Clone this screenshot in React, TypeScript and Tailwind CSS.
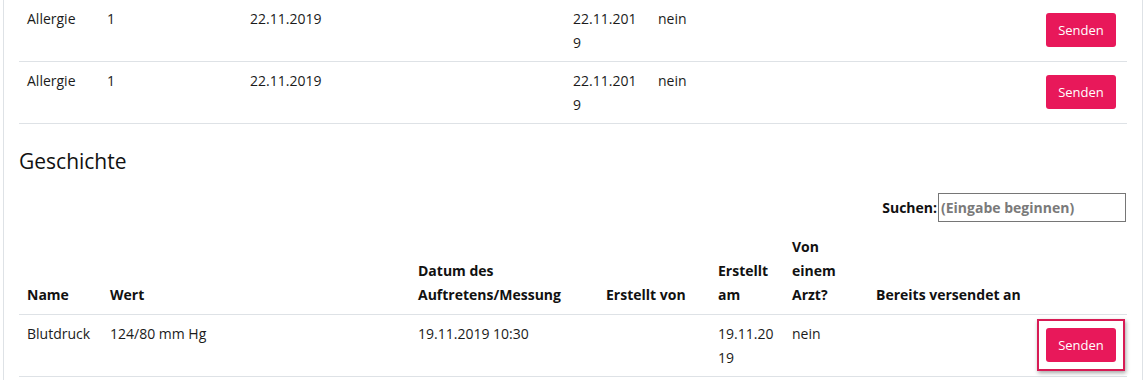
import React from "react";

const font = { fontFamily: '"Open Sans", "Noto Sans", Arial, sans-serif' };

function SendButton({ highlight }: { highlight?: boolean }) {
  return (
    <span className="relative -top-[1px] inline-block align-middle">
      {highlight && (
        <span className="absolute -left-[9px] -right-[9px] -top-[9px] -bottom-[9px] border-2 border-[#d81b55] shadow-[1px_2px_4px_rgba(0,0,0,0.35)]" />
      )}
      <button className="relative flex h-[34px] w-[70px] items-center justify-center rounded-[3px] bg-[#e8185a] text-[13px] text-white">
        Senden
      </button>
    </span>
  );
}

const topCols = [80, 143, 211, 112, 85, 90, 200, 187];
const botCols = [83, 308, 188, 112, 74, 84, 170, 89];

function TopRow() {
  return (
    <tr className="border-t border-[#dee2e6] align-top">
      <td className="px-2 pt-[7px] pb-[6px]">Allergie</td>
      <td className="px-2 pt-[7px] pb-[6px]">1</td>
      <td className="px-2 pt-[7px] pb-[6px]">22.11.2019</td>
      <td className="px-2 pt-[7px] pb-[6px]"></td>
      <td className="px-2 pt-[7px] pb-[6px] break-all">22.11.2019</td>
      <td className="px-2 pt-[7px] pb-[6px]">nein</td>
      <td className="px-2 pt-[7px] pb-[6px]"></td>
      <td className="pl-2 pr-[11px] text-right align-middle">
        <SendButton />
      </td>
    </tr>
  );
}

export default function App() {
  return (
    <div className="h-[381px] w-[1146px] overflow-hidden bg-white text-[14px] leading-[24px] text-[#1b1b1b]" style={font}>
      <div className="ml-[3px] h-full w-[1140px] border-x border-[#dee2e6] px-[15px]">
        <table className="-mt-px w-[1108px] table-fixed border-collapse">
          <colgroup>
            {topCols.map((w, i) => (
              <col key={i} style={{ width: w }} />
            ))}
          </colgroup>
          <tbody>
            <TopRow />
            <TopRow />
            <tr className="border-t border-[#dee2e6]">
              <td colSpan={8} className="p-0"></td>
            </tr>
          </tbody>
        </table>

        <h2 className="mt-[24px] text-[21px] leading-[26px] text-[#111]">Geschichte</h2>

        <div className="mt-[19px] flex items-center justify-end pr-px">
          <label className="font-bold text-[#111]">Suchen:</label>
          <input
            className="ml-[1px] h-[29px] w-[188px] border border-[#767676] px-[2px] font-bold outline-none placeholder:text-[#7a7a7a]"
            placeholder="(Eingabe beginnen)"
          />
        </div>

        <table className="mt-[13px] w-[1108px] table-fixed border-collapse">
          <colgroup>
            {botCols.map((w, i) => (
              <col key={i} style={{ width: w }} />
            ))}
          </colgroup>
          <thead>
            <tr className="border-b border-[#dee2e6] align-bottom text-left font-bold text-[#111]">
              <th className="px-2 pb-[7px]">Name</th>
              <th className="px-2 pb-[7px]">Wert</th>
              <th className="px-2 pb-[7px]">Datum des Auftretens/Messung</th>
              <th className="px-2 pb-[7px]">Erstellt von</th>
              <th className="px-2 pb-[7px]">Erstellt am</th>
              <th className="px-2 pb-[7px]">Von einem Arzt?</th>
              <th className="px-2 pb-[7px]">Bereits versendet an</th>
              <th className="px-2 pb-[7px]"></th>
            </tr>
          </thead>
          <tbody>
            <tr className="border-b border-[#dee2e6] align-top">
              <td className="px-2 pt-[7px] pb-[6px]">Blutdruck</td>
              <td className="px-2 pt-[7px] pb-[6px]">124/80 mm Hg</td>
              <td className="px-2 pt-[7px] pb-[6px]">19.11.2019 10:30</td>
              <td className="px-2 pt-[7px] pb-[6px]"></td>
              <td className="px-2 pt-[7px] pb-[6px] break-all">19.11.2019</td>
              <td className="px-2 pt-[7px] pb-[6px]">nein</td>
              <td className="px-2 pt-[7px] pb-[6px]"></td>
              <td className="pl-2 pr-[11px] text-right align-middle">
                <SendButton highlight />
              </td>
            </tr>
          </tbody>
        </table>
      </div>
    </div>
  );
}
